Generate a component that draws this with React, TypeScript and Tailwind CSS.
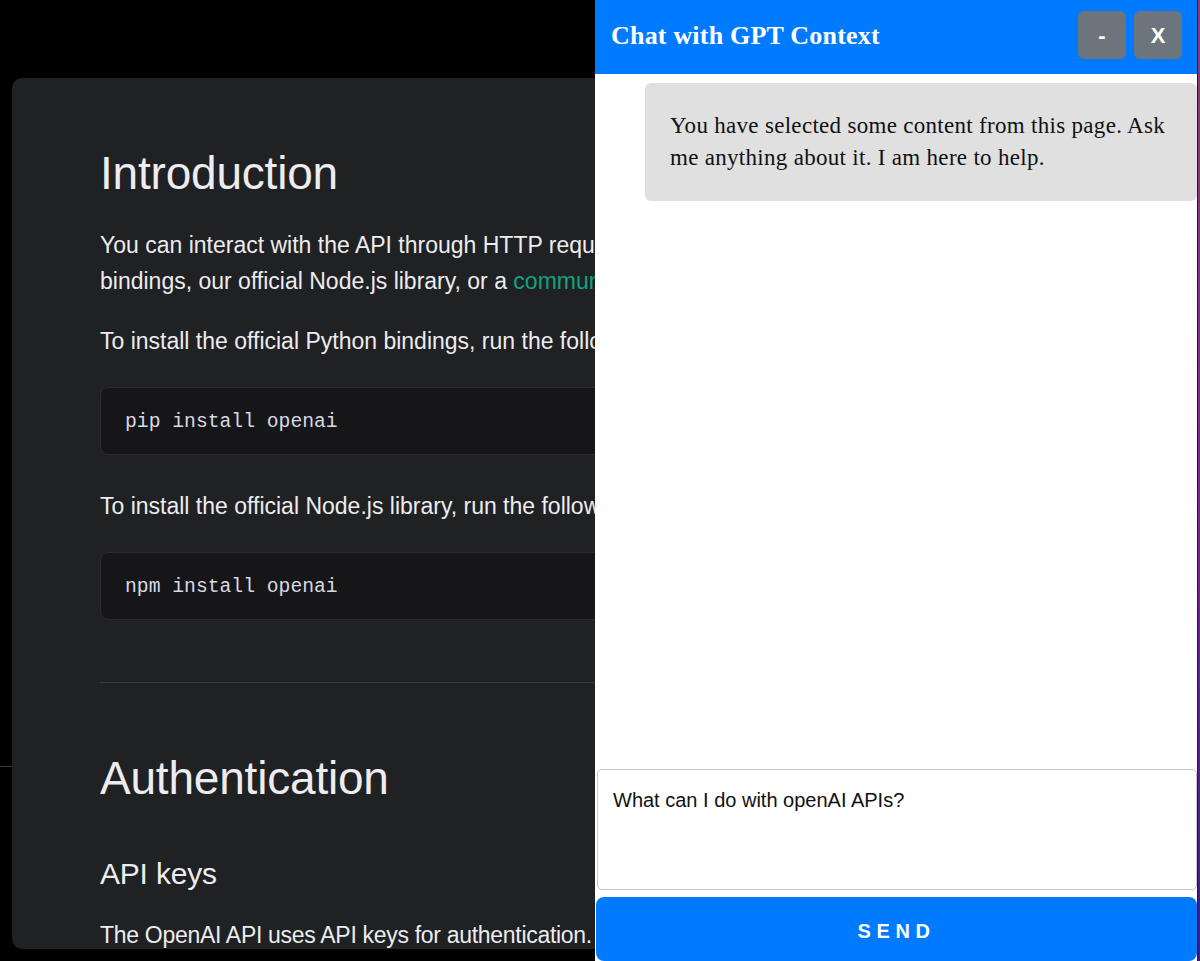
export default function App() {
  const sans = { fontFamily: "'Liberation Sans', Arial, sans-serif" };

  return (
    <div className="relative flex h-[961px] w-[1200px] overflow-hidden bg-black" style={sans}>
      {/* docs page behind the chat panel */}
      <div className="relative flex-1">
        <div className="absolute left-0 top-[766px] h-px w-[12px] bg-[#3a3a3e]" />
        <div className="ml-[12px] mt-[78px] h-[871px] w-[1100px] overflow-hidden rounded-[10px] bg-[#202123] pl-[88px] pt-[67px] text-[#ececf1]">
          <h1 className="whitespace-nowrap text-[46px] leading-[56px] tracking-[-0.2px]">Introduction</h1>
          <p className="mt-[26px] whitespace-nowrap text-[23px] leading-[36px]">
            You can interact with the API through HTTP requests from any language, via our official Python
            <br />
            bindings, our official Node.js library, or a <span className="text-[#10a37f]">community-maintained library</span>.
          </p>
          <p className="mt-[24px] whitespace-nowrap text-[23px] leading-[36px]">
            To install the official Python bindings, run the following command:
          </p>
          <CodeBlock text="pip install openai" />
          <p className="mt-[33px] whitespace-nowrap text-[23px] leading-[36px]">
            To install the official Node.js library, run the following command in your Node.js project directory:
          </p>
          <CodeBlock text="npm install openai" />
          <div className="mt-[62px] h-px w-full bg-[#3a3a3f]" />
          <h1 className="mt-[67px] whitespace-nowrap text-[46px] leading-[56px] tracking-[-0.2px]">Authentication</h1>
          <h2 className="mt-[49px] whitespace-nowrap text-[30px] leading-[38px] tracking-[-0.2px]">API keys</h2>
          <p className="mt-[27px] whitespace-nowrap text-[23px] leading-[30px] tracking-[-0.3px]">
            The OpenAI API uses API keys for authentication.
          </p>
        </div>
      </div>
      <div className="w-[3px] bg-gradient-to-b from-[#8a3e6e] via-[#7a2590] to-[#3b1a8a]" />

      {/* chat panel overlay */}
      <div className="absolute left-[595px] top-0 flex h-[961px] w-[603px] flex-col border-r border-[#1e1e24] bg-white">
        <div className="flex h-[74px] shrink-0 items-center justify-between bg-[#007bff] pb-[4px] pl-4 pr-[15px]">
          <span
            className="text-[26px] font-bold tracking-[0.2px] text-white"
            style={{ fontFamily: "'Liberation Serif', 'Times New Roman', serif" }}
          >
            Chat with GPT Context
          </span>
          <div className="flex gap-2">
            <button className="flex h-[48px] w-[48px] items-center justify-center rounded-md bg-[#6c757d] text-[22px] font-bold text-white">
              -
            </button>
            <button className="flex h-[48px] w-[48px] items-center justify-center rounded-md bg-[#6c757d] text-[22px] font-bold text-white">
              X
            </button>
          </div>
        </div>

        <div className="flex-1 pt-[9px]">
          <div
            className="ml-[50px] rounded-md bg-[#e0e0e0] px-[25px] py-[27px] text-[23px] leading-[32px] tracking-[0.3px] text-[#111]"
            style={{ fontFamily: "'Liberation Serif', 'Times New Roman', serif" }}
          >
            You have selected some content from this page. Ask me anything about it. I am here to help.
          </div>
        </div>

        <textarea
          readOnly
          value="What can I do with openAI APIs?"
          className="ml-[2px] h-[121px] shrink-0 resize-none rounded-[5px] border border-[#c8c8c8] px-[15px] pt-[16px] text-[20px] leading-[28px] text-[#111] outline-none"
          style={sans}
        />
        <button className="ml-[1px] mt-[7px] h-[64px] shrink-0 rounded-lg bg-[#007bff] pt-[4px] text-[20px] font-bold tracking-[0.28em] text-white">
          SEND
        </button>
      </div>
    </div>
  );
}

function CodeBlock({ text }: { text: string }) {
  return (
    <div className="mt-[28px] flex h-[68px] items-center rounded-lg border border-[#2b2b30] bg-[#161618] pl-[24px] pt-[3px]">
      <span
        className="text-[19.7px] text-[#d9d9e3]"
        style={{ fontFamily: "'Liberation Mono', 'Courier New', monospace" }}
      >
        {text}
      </span>
    </div>
  );
}
